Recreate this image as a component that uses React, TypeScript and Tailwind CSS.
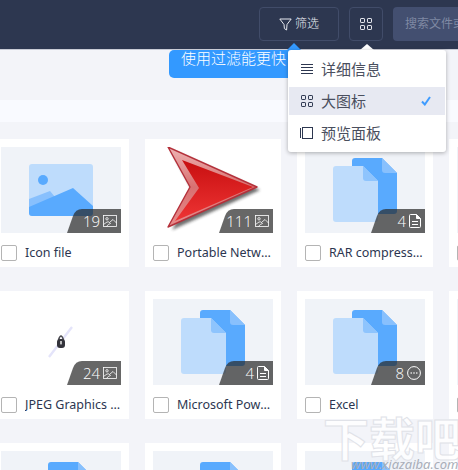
const CJK = "font-['Noto_Sans','Noto_Sans_CJK_SC',sans-serif]";

function Grid4({ className = "" }: { className?: string }) {
  return (
    <svg viewBox="0 0 12 12" className={className} fill="none" stroke="currentColor" strokeWidth="1">
      <rect x="0.5" y="0.5" width="4" height="4" rx="0.6" />
      <rect x="7.5" y="0.5" width="4" height="4" rx="0.6" />
      <rect x="0.5" y="7.5" width="4" height="4" rx="0.6" />
      <rect x="7.5" y="7.5" width="4" height="4" rx="0.6" />
    </svg>
  );
}

function BadgeIcon({ kind }: { kind: "img" | "doc" | "more" }) {
  if (kind === "img")
    return (
      <svg viewBox="0 0 14 12" className="h-3 w-[14px]" fill="none" stroke="white" strokeWidth="0.8">
        <rect x="0.5" y="0.5" width="13" height="11" />
        <circle cx="4" cy="3.8" r="1.2" />
        <path d="M0.5 9.5 L4 7 Q6 6 7.5 8.5 Q5 9 3.5 11.5 M7 7 L10 4.5 L13.5 8" />
      </svg>
    );
  if (kind === "doc")
    return (
      <svg viewBox="0 0 12 14" className="h-[14px] w-3" fill="none" stroke="white" strokeWidth="1">
        <path d="M0.5 1.5 Q0.5 0.5 1.5 0.5 H7.5 L11.5 4.5 V12.5 Q11.5 13.5 10.5 13.5 H1.5 Q0.5 13.5 0.5 12.5 Z" />
        <path d="M7.5 0.5 V4.5 H11.5" fill="white" />
        <path d="M3 7.5 H9 M3 10.5 H9" />
      </svg>
    );
  return (
    <svg viewBox="0 0 14 14" className="h-[14px] w-[14px]" fill="none" stroke="white" strokeWidth="1">
      <circle cx="7" cy="7" r="6.4" />
      <circle cx="4.2" cy="7" r="0.8" fill="white" stroke="none" />
      <circle cx="7" cy="7" r="0.8" fill="white" stroke="none" />
      <circle cx="9.8" cy="7" r="0.8" fill="white" stroke="none" />
    </svg>
  );
}

function DocsArt() {
  return (
    <svg viewBox="0 0 120 86" className="h-[86px] w-[120px]">
      <path d="M47 14 Q47 11 50 11 H77 L92 26 V64 Q92 67 89 67 H50 Q47 67 47 64 Z" fill="#59aafe" />
      <path d="M77 11 L92 26 H80 Q77 26 77 23 Z" fill="#88c0fd" />
      <path d="M28 22 Q28 19 31 19 H58 L73 34 V72 Q73 75 70 75 H31 Q28 75 28 72 Z" fill="#bedcfc" />
      <path d="M58 19 L73 34 H61 Q58 34 58 31 Z" fill="#8ec4fd" />
    </svg>
  );
}

function ImageArt() {
  return (
    <svg viewBox="0 0 120 86" className="h-[86px] w-[120px]">
      <rect x="28" y="17" width="64" height="52" rx="3" fill="#bedcfc" />
      <circle cx="42" cy="33" r="5" fill="#59aafe" />
      <path d="M28 52 L49 44 L54 50 L40 66 H28 Z" fill="#88c0fd" />
      <path d="M28 60 L72 41 L92 59 V66 Q92 69 89 69 H31 Q28 69 28 66 Z" fill="#59aafe" />
    </svg>
  );
}

function RedArrow() {
  return (
    <svg viewBox="0 0 120 86" className="h-[86px] w-[120px]">
      <defs>
        <linearGradient id="redfill" x1="0" y1="0" x2="0" y2="1">
          <stop offset="0" stopColor="#c80f10" />
          <stop offset="1" stopColor="#ee3434" />
        </linearGradient>
        <linearGradient id="edge" x1="0" y1="0" x2="0" y2="1">
          <stop offset="0" stopColor="#eeb4b4" />
          <stop offset="0.5" stopColor="#d87070" />
          <stop offset="1" stopColor="#e88c8c" />
        </linearGradient>
        <filter id="blur" x="-20%" y="-20%" width="140%" height="140%">
          <feGaussianBlur stdDeviation="1.8" />
        </filter>
      </defs>
      <path d="M18 3 L107 43 L19 83 L40 44 Z" fill="#222" opacity="0.65" filter="url(#blur)" />
      <path d="M15 0 L104 40 L15 80 L37 40 Z" fill="url(#edge)" stroke="#b4303a" strokeWidth="1.4" strokeLinejoin="round" />
      <path d="M29 13 L100 40 L22 74 L46 41 Z" fill="url(#redfill)" />
    </svg>
  );
}

function LockArt() {
  return (
    <svg viewBox="0 0 120 86" className="h-[86px] w-[120px]">
      <path d="M48 58 L71 28" stroke="#e4e4fa" strokeWidth="2.4" />
      <path d="M57.5 41 Q60 33 62.5 41" stroke="#4a4a50" strokeWidth="1.6" fill="none" />
      <rect x="56" y="40" width="8" height="9" rx="3" fill="#33333b" />
      <rect x="59.2" y="42" width="1.6" height="3.4" fill="#ddd" />
    </svg>
  );
}

type Item = { name: string; count: number; icon: "img" | "doc" | "more"; art: "docs" | "image" | "arrow" | "lock" };

const items: Item[] = [
  { name: "Icon file", count: 19, icon: "img", art: "image" },
  { name: "Portable Network Graphics", count: 111, icon: "img", art: "arrow" },
  { name: "RAR compressed archive", count: 4, icon: "doc", art: "docs" },
  { name: "Text document", count: 3, icon: "doc", art: "docs" },
  { name: "JPEG Graphics Interchange", count: 24, icon: "img", art: "lock" },
  { name: "Microsoft PowerPoint", count: 4, icon: "doc", art: "docs" },
  { name: "Excel", count: 8, icon: "more", art: "docs" },
  { name: "Word", count: 2, icon: "doc", art: "docs" },
  { name: "PDF", count: 5, icon: "doc", art: "docs" },
  { name: "Zip", count: 6, icon: "doc", art: "docs" },
  { name: "Video", count: 7, icon: "more", art: "docs" },
  { name: "Audio", count: 1, icon: "more", art: "docs" },
];

function Card({ item }: { item: Item }) {
  const white = item.art === "arrow" || item.art === "lock";
  return (
    <div className="flex h-[128px] w-[136px] flex-col bg-white px-2 pt-2">
      <div className={`relative h-[86px] w-[120px] ${white ? "bg-white" : "bg-[#f0f3f8]"}`}>
        {item.art === "docs" && <DocsArt />}
        {item.art === "image" && <ImageArt />}
        {item.art === "arrow" && <RedArrow />}
        {item.art === "lock" && <LockArt />}
        <div className="absolute bottom-0 right-0 h-6 w-[54px]">
          <svg viewBox="0 0 54 24" className="absolute inset-0 h-6 w-[54px]">
            <path d="M0 24 L6 7 Q8.5 0 15 0 H54 V24 Z" fill="#262626" fillOpacity="0.7" />
          </svg>
          <div className="absolute inset-0 flex items-center justify-end gap-[3px] pr-1 text-[15px] font-light leading-6 text-white [font-family:'Open_Sans',sans-serif]">
            <span>{item.count}</span>
            <BadgeIcon kind={item.icon} />
          </div>
        </div>
      </div>
      <div className="mt-3 flex h-4 items-start gap-2">
        <div className="h-4 w-4 shrink-0 rounded-[2px] border border-[#b4b4b4] bg-white" />
        <div className="min-w-0 flex-1 truncate text-[12.5px] leading-[15px] text-[#2c3650]">{item.name}</div>
      </div>
    </div>
  );
}

export default function App() {
  return (
    <div className={`relative h-[470px] w-[458px] overflow-hidden bg-[#f3f4f9] ${CJK}`}>
      <header className="flex h-[50px] items-start justify-end gap-[10px] border-b border-[#c9ccd6] bg-[#2d3750] pt-[7px]">
        <button className="flex h-[34px] w-[80px] items-center justify-center gap-[3px] rounded-[4px] border border-[#414c69] text-xs font-light text-[#e8eaf0]">
          <svg viewBox="0 0 13 13" className="h-[13px] w-[13px]" fill="none" stroke="#e8eaf0" strokeWidth="1">
            <path d="M0.8 1 H12.2 L8 6.5 L7.6 12 L5.4 10.6 L5 6.5 Z" strokeLinejoin="round" />
          </svg>
          筛选
        </button>
        <button className="flex h-[34px] w-[34px] shrink-0 items-center justify-center rounded-[4px] border border-[#414c69] text-[#e8eaf0]">
          <Grid4 className="h-3 w-3" />
        </button>
        <div className="flex h-[34px] w-[65px] shrink-0 items-center overflow-hidden whitespace-nowrap rounded-l-[4px] bg-[#434f70] pl-3 text-xs text-[#7f89a3]">
          搜索文件或文件夹
        </div>
      </header>

      <div className="h-[50px]" />
      <div className="h-[22px] bg-[#f9faff]" />

      <main className="ml-[-7px] mt-[17px] grid w-[640px] grid-cols-[136px_136px_136px_136px] gap-x-4 gap-y-6">
        {items.map((item) => (
          <Card key={item.name} item={item} />
        ))}
      </main>

      {/* Tooltip under the toolbar */}
      <div className="absolute left-[169px] top-[50px] h-[28px] w-[130px] overflow-hidden whitespace-nowrap rounded-[5px] bg-[#3399ff] pl-[12px] text-[15px] font-light leading-[17px] text-white">
        使用过滤能更快
      </div>
      <div className="absolute left-[287px] top-[43px] h-0 w-0 border-x-[7px] border-b-[7px] border-x-transparent border-b-[#3399ff]" />

      {/* Dropdown menu */}
      <div className="absolute left-[367px] top-[44px] h-0 w-0 -translate-x-1/2 border-x-[7px] border-b-[6px] border-x-transparent border-b-white" />
      <div className="absolute left-[288px] top-[50px] h-[102px] w-[158px] rounded-[3px] bg-white px-px pt-[5px] text-[15px] text-[#4a4f5e] shadow-[0_1px_4px_rgba(0,0,0,0.3)]">
        <div className="flex flex-col gap-1">
          <div className="flex h-7 items-center gap-2 pl-3">
            <svg viewBox="0 0 12 12" className="h-3 w-3" fill="none" stroke="#2d3750" strokeWidth="1">
              <path d="M0 1.5 H12 M0 4.5 H12 M0 7.5 H12 M0 10.5 H12" />
            </svg>
            详细信息
          </div>
          <div className="flex h-7 items-center gap-2 bg-[#e7e9f2] pl-3">
            <Grid4 className="h-3 w-3 text-[#2d3750]" />
            大图标
            <svg viewBox="0 0 10 10" className="ml-auto mr-[14px] h-[10px] w-[10px]" fill="none" stroke="#3f9cff" strokeWidth="2">
              <path d="M1 5.5 L3.8 8.5 L9 1" />
            </svg>
          </div>
          <div className="flex h-7 items-center gap-2 pl-3">
            <svg viewBox="0 0 13 12" className="-ml-px h-3 w-[13px]" fill="none" stroke="#2d3750" strokeWidth="1">
              <rect x="2.5" y="0.5" width="10" height="11" />
              <path d="M0.5 1 V11" />
            </svg>
            预览面板
          </div>
        </div>
      </div>

      {/* Watermark */}
      <div className="pointer-events-none absolute left-[323px] top-[409px] whitespace-nowrap text-[46px] font-bold leading-[55px] text-white/80 [-webkit-text-stroke:1px_#e0e2e8] [font-family:'Noto_Sans_CJK_SC',sans-serif]">
        下载吧
      </div>
      <div className="pointer-events-none absolute left-[351px] top-[456px] whitespace-nowrap text-[13px] italic leading-4 text-[#a9aeb8]">
        www.xiazaiba.com
      </div>
    </div>
  );
}
